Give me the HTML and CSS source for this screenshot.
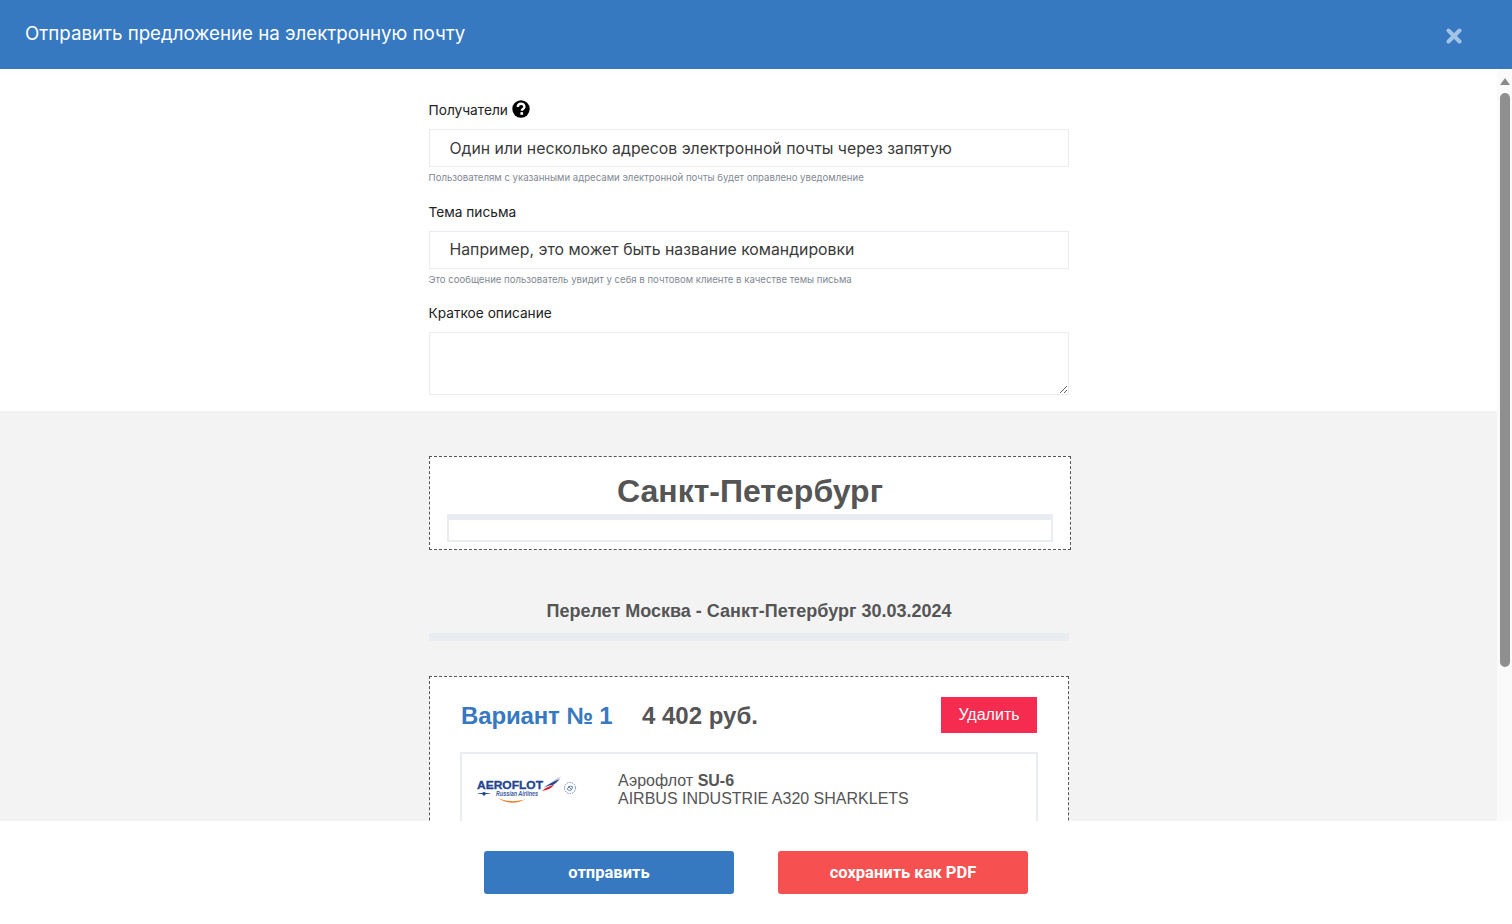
FILE: index.html
```html
<!DOCTYPE html>
<html lang="ru">
<head>
  <meta charset="UTF-8" />
  <title>Отправить предложение на электронную почту</title>
  <link rel="stylesheet" href="styles.css">
</head>
<body>
  <header class="modal-header">
    <h1>Отправить предложение на электронную почту</h1>
    <svg class="close-icon" viewBox="0 0 16 16" width="16" height="16">
      <path d="M2.5 2.5l11 11M13.5 2.5l-11 11" stroke="#a3c3e6" stroke-width="4" stroke-linecap="round" fill="none" />
    </svg>
  </header>

  <div class="modal-body">
    <div class="content">
      <section class="form-section">
        <form class="form">
          <label class="label">Получатели
            <svg class="help-icon" viewBox="0 0 18 18" width="18" height="18">
              <circle cx="9" cy="9" r="8.7" fill="#000" />
              <path d="M5.8 7c0-4.4 6.6-4.2 6.6-.3 0 2.4-2.6 2.3-2.6 4" stroke="#fff" stroke-width="2.4" fill="none" />
              <rect x="8.4" y="12.2" width="2.7" height="2.6" fill="#fff" />
            </svg>
          </label>
          <input class="input" type="text" placeholder="Один или несколько адресов электронной почты через запятую" />
          <p class="hint">Пользователям с указанными адресами электронной почты будет оправлено уведомление</p>

          <label class="label">Тема письма</label>
          <input class="input" type="text" placeholder="Например, это может быть название командировки" />
          <p class="hint">Это сообщение пользователь увидит у себя в почтовом клиенте в качестве темы письма</p>

          <label class="label">Краткое описание</label>
          <textarea class="textarea"></textarea>
        </form>
      </section>

      <section class="preview">
        <div class="city-box">
          <h2>Санкт-Петербург</h2>
          <div class="city-frame"></div>
        </div>

        <h3 class="route">Перелет Москва - Санкт-Петербург 30.03.2024</h3>
        <div class="route-bar"></div>

        <div class="variant">
          <div class="variant-head">
            <span class="variant-name">Вариант № 1</span>
            <span class="variant-price">4 402 руб.</span>
            <button class="btn-delete" type="button">Удалить</button>
          </div>
          <div class="flight">
            <svg class="airline-logo" viewBox="0 0 102 30" width="102" height="30">
              <text x="0" y="13" class="logo-name" textLength="66" lengthAdjust="spacingAndGlyphs">AEROFLOT</text>
              <path d="M65 14C71 8 78 3 85 0 82 3 79 5 77 7 73 8 69 10 65 14Z" fill="#c4cbd6" />
              <path d="M67 12C71 8 76 6 83 3 80 6 78 8 76 9 73 9 70 10 67 12Z" fill="#24458f" />
              <path d="M65 15C69 11 73 10 77 9 75 12 71 14 65 15Z" fill="#d8232a" />
              <path d="M0 17h5l2-1.2 2 1.2h5c-2 .8-3.500 1-5 1l-2 2-2-2c-1.500 0-3-.2-5-1z" fill="#24458f" />
              <text x="19" y="20" class="logo-sub" textLength="42" lengthAdjust="spacingAndGlyphs">Russian Airlines</text>
              <path d="M21 22C29 28 40 28 49 23 40 26 30 26 21 22Z" fill="#ec7a22" />
              <circle cx="93" cy="12" r="5.6" fill="none" stroke="#6d8cbd" stroke-width="1" stroke-dasharray="1.5 1" />
              <path d="M90 13l3-3 3 1-3 4zM91 10l4 4" fill="none" stroke="#4a70ad" stroke-width=".8" />
            </svg>
            <div class="flight-info">
              Аэрофлот <b>SU-6</b><br />
              AIRBUS INDUSTRIE A320 SHARKLETS
            </div>
          </div>
        </div>
      </section>
    </div>

    <div class="scrollbar">
      <span class="scroll-arrow"></span>
      <span class="scroll-thumb"></span>
    </div>
  </div>

  <footer class="modal-footer">
    <button class="btn btn-send" type="button">отправить</button>
    <button class="btn btn-pdf" type="button">сохранить как PDF</button>
  </footer>
</body>
</html>
```

FILE: styles.css
```css
* {
  box-sizing: border-box;
}

body {
  margin: 0;
  height: 100vh;
  display: flex;
  flex-direction: column;
  overflow: hidden;
  background: #fff;
  font-family: Inter, "Noto Sans", sans-serif;
  color: #222;
}

.modal-header {
  height: 69px;
  flex: none;
  display: flex;
  align-items: center;
  justify-content: space-between;
  padding: 0 50px 0 25px;
  background: #3779c1;
  color: #fff;
}

.modal-header h1 {
  margin: 0 0 2px;
  font-size: 18.7px;
  font-weight: 400;
}

.close-icon {
  margin-top: 3px;
}

.modal-body {
  flex: 1;
  min-height: 0;
  display: flex;
}

.content {
  flex: 1;
  min-width: 0;
  overflow: hidden;
}

.scrollbar {
  width: 15px;
  flex: none;
  display: flex;
  flex-direction: column;
  align-items: center;
  background: #fafafa;
}

.scroll-arrow {
  margin-top: 9px;
  border-left: 5px solid transparent;
  border-right: 5px solid transparent;
  border-bottom: 7px solid #8a8a8a;
}

.scroll-thumb {
  width: 10px;
  height: 574px;
  margin-top: 8px;
  border-radius: 5px;
  background: #8f8f8f;
}

.form-section {
  height: 342px;
  padding-top: 32px;
}

.form {
  width: 640px;
  margin: 0 auto;
}

.label {
  display: flex;
  align-items: center;
  gap: 4px;
  height: 18px;
  margin-bottom: 10px;
  font-size: 13.7px;
}

.help-icon {
  margin-top: -3px;
}

.input,
.textarea {
  display: block;
  width: 100%;
  border: 1px solid #e9ecf1;
  background: #fff;
  font-family: inherit;
  outline: none;
}

.input {
  height: 38px;
  padding: 0 20px;
  font-size: 15.8px;
}

.input::placeholder {
  color: #3a3a3a;
  opacity: 1;
}

.textarea {
  height: 63px;
}

.hint {
  height: 14px;
  margin: 4px 0 17.5px;
  font-size: 9.6px;
  line-height: 14px;
  color: #7f8894;
}

.preview {
  padding-top: 45px;
  background: #f3f3f3;
  height: 410px;
  color: #555;
  font-family: "Liberation Sans", Arial, sans-serif;
}

.city-box {
  width: 642px;
  height: 94px;
  margin: 0 0 0 429px;
  padding: 14px 17px 0;
  border: 1px dashed #555;
  background: #fff;
}

.city-box h2 {
  margin: 0;
  height: 43px;
  font-size: 32px;
  line-height: 40px;
  text-align: center;
}

.city-frame {
  height: 28px;
  border: 2px solid #e9ecf0;
  border-top-width: 6px;
}

.route {
  width: 640px;
  margin: 50px 0 0 429px;
  font-size: 18px;
  line-height: 22px;
  text-align: center;
}

.route-bar {
  width: 640px;
  height: 8px;
  margin: 11px 0 0 429px;
  background: #e9ecf0;
}

.variant {
  width: 640px;
  height: 200px;
  margin: 35px 0 0 429px;
  padding: 20px 31px 0;
  border: 1px dashed #555;
  background: #fff;
}

.variant-head {
  display: flex;
  align-items: center;
  height: 36px;
}

.variant-name {
  width: 181px;
  padding-top: 2px;
  font-size: 24px;
  font-weight: 700;
  letter-spacing: -0.15px;
  color: #3779c1;
}

.variant-price {
  flex: 1;
  padding-top: 2px;
  font-size: 24px;
  font-weight: 700;
}

.btn-delete {
  width: 96px;
  height: 36px;
  border: none;
  background: #f52c50;
  color: #fff;
  font-family: inherit;
  font-size: 16px;
}

.flight {
  display: flex;
  height: 120px;
  margin: 19px -1px 0;
  padding: 18px 15px;
  border: 2px solid #e9ecf0;
}

.airline-logo {
  flex: none;
  margin-top: 4px;
}

.logo-name {
  font-family: "Liberation Sans", Arial, sans-serif;
  font-size: 10.5px;
  font-weight: 700;
  fill: #24458f;
  stroke: #24458f;
  stroke-width: 0.3;
}

.logo-sub {
  font-family: "Liberation Sans", Arial, sans-serif;
  font-size: 6.5px;
  font-style: italic;
  font-weight: 700;
  fill: #3a5a9f;
}

.flight-info {
  margin-left: 39px;
  font-size: 16px;
  line-height: 18px;
}

.modal-footer {
  height: 103px;
  flex: none;
  display: flex;
  justify-content: center;
  gap: 44px;
  padding-top: 30px;
  background: #fff;
}

.btn {
  width: 250px;
  height: 43px;
  border: none;
  border-radius: 3px;
  color: #fff;
  font-family: Roboto, sans-serif;
  font-size: 16.5px;
  font-weight: 700;
}

.btn-send {
  background: #3779c1;
}

.btn-pdf {
  background: #f75050;
}
```
